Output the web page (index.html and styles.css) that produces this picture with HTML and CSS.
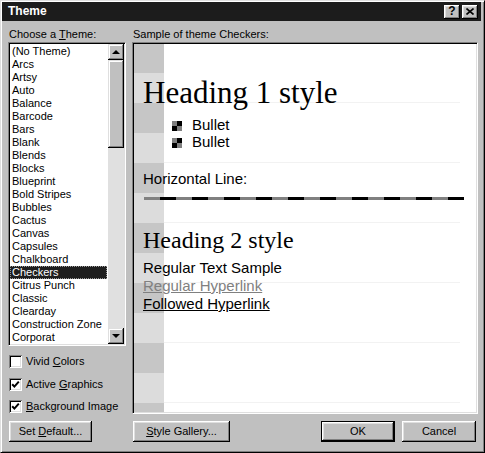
FILE: index.html
```html
<!DOCTYPE html>
<html>
<head>
<meta charset="utf-8">
<title>Theme</title>
<link rel="stylesheet" href="styles.css">
</head>
<body>
<div class="window">
  <div class="titlebar">
    <span class="title">Theme</span>
    <div class="tb-buttons">
      <span class="tb-btn tb-help">?</span>
      <span class="tb-btn"><svg width="8" height="7" viewBox="0 0 8 7"><path d="M0.5 0.5 L7.5 6.5 M7.5 0.5 L0.5 6.5" stroke="#000" stroke-width="1.6" fill="none"/></svg></span>
    </div>
  </div>
  <div class="main">
    <div class="left">
      <div class="label lbl-left">Choose a <u>T</u>heme:</div>
      <div class="listbox">
        <ul class="items">
          <li>(No Theme)</li>
          <li>Arcs</li>
          <li>Artsy</li>
          <li>Auto</li>
          <li>Balance</li>
          <li>Barcode</li>
          <li>Bars</li>
          <li>Blank</li>
          <li>Blends</li>
          <li>Blocks</li>
          <li>Blueprint</li>
          <li>Bold Stripes</li>
          <li>Bubbles</li>
          <li>Cactus</li>
          <li>Canvas</li>
          <li>Capsules</li>
          <li>Chalkboard</li>
          <li class="selected">Checkers</li>
          <li>Citrus Punch</li>
          <li>Classic</li>
          <li>Clearday</li>
          <li>Construction Zone</li>
          <li>Corporat</li>
        </ul>
        <div class="scrollbar">
          <div class="sb-btn"><svg width="16" height="16" viewBox="0 0 16 16"><polygon points="4,10 12,10 8,6" fill="#000"/></svg></div>
          <div class="sb-thumb"></div>
          <div class="sb-track"></div>
          <div class="sb-btn"><svg width="16" height="16" viewBox="0 0 16 16"><polygon points="4,6 12,6 8,10" fill="#000"/></svg></div>
        </div>
      </div>
      <div class="check check-1"><span class="box"></span><span>Vivid <u>C</u>olors</span></div>
      <div class="check check-2"><span class="box"><svg width="13" height="13" viewBox="0 0 13 13"><path d="M3.2 6.2 L5.4 8.6 L9.8 3.6" stroke="#000" stroke-width="2" fill="none"/></svg></span><span>Active <u>G</u>raphics</span></div>
      <div class="check check-3"><span class="box"><svg width="13" height="13" viewBox="0 0 13 13"><path d="M3.2 6.2 L5.4 8.6 L9.8 3.6" stroke="#000" stroke-width="2" fill="none"/></svg></span><span><u>B</u>ackground Image</span></div>
    </div>
    <div class="right">
      <div class="label lbl-right">Sample of theme Checkers:</div>
      <div class="preview">
        <div class="h1">Heading 1 style</div>
        <ul class="bullets">
          <li><span class="bullet"></span>Bullet</li>
          <li><span class="bullet"></span>Bullet</li>
        </ul>
        <div class="hr-label">Horizontal Line:</div>
        <div class="dash"></div>
        <div class="h2">Heading 2 style</div>
        <div class="text">Regular Text Sample</div>
        <div class="text link">Regular Hyperlink</div>
        <div class="text followed">Followed Hyperlink</div>
      </div>
    </div>
  </div>
  <div class="buttons">
    <div class="btn btn-default">Set <u>D</u>efault...</div>
    <div class="btn btn-style"><u>S</u>tyle Gallery...</div>
    <div class="btn btn-ok">OK</div>
    <div class="btn btn-cancel">Cancel</div>
  </div>
</div>
</body>
</html>
```
FILE: styles.css
```css
* { box-sizing: border-box; }
html, body { margin: 0; padding: 0; background: #c0c0c0; }
body {
  font-family: "Liberation Sans", Arial, sans-serif;
  font-size: 11px;
  color: #000;
}
u { text-decoration: underline; text-underline-offset: 1px; }

.window {
  width: 485px;
  height: 453px;
  background: #c0c0c0;
  border: 1px solid;
  border-color: #dfdfdf #000 #000 #dfdfdf;
  box-shadow: inset 1px 1px #fff, inset -1px -1px #808080;
  padding: 1px;
  display: flex;
  flex-direction: column;
}

.titlebar {
  height: 19px;
  margin-right: 2px;
  background: #1c1c1c;
  display: flex;
  align-items: center;
  padding: 0 3px 0 6px;
}
.title {
  color: #fff;
  font-weight: bold;
  font-size: 12px;
  line-height: 19px;
}
.tb-buttons {
  margin-left: auto;
  display: flex;
  gap: 2px;
}
.tb-btn {
  width: 16px;
  height: 14px;
  background: #c0c0c0;
  box-shadow: inset -1px -1px #000, inset 1px 1px #fff, inset -2px -2px #808080, inset 2px 2px #dfdfdf;
  display: flex;
  align-items: center;
  justify-content: center;
  font-weight: bold;
  font-size: 12px;
  line-height: 14px;
  padding-bottom: 1px;
}

.main {
  display: flex;
  margin-top: 7px;
  padding-left: 6px;
  gap: 6px;
}
.left { width: 118px; }
.right { width: 346px; }

.label {
  height: 13px;
  line-height: 13px;
  white-space: nowrap;
}
.lbl-left { padding-left: 1px; }
.lbl-right { padding-left: 1px; }

.listbox {
  margin-top: 1px;
  height: 304px;
  background: #fff;
  border: 1px solid;
  border-color: #808080 #fff #fff #808080;
  box-shadow: inset 1px 1px #000, inset -1px -1px #dfdfdf;
  padding: 1px;
  display: flex;
}
.items {
  list-style: none;
  margin: 0;
  padding: 1px 0 0 0;
  flex: 1;
  overflow: hidden;
}
.items li {
  height: 13px;
  line-height: 13px;
  padding-left: 2px;
  margin-right: 1px;
  white-space: nowrap;
}
.items li.selected {
  background: #1e1e1e;
  color: #fff;
  outline: 1px dotted #9a9a9a;
  outline-offset: -1px;
}
.scrollbar {
  width: 16px;
  display: flex;
  flex-direction: column;
}
.sb-btn, .sb-thumb {
  background: #c0c0c0;
  box-shadow: inset -1px -1px #000, inset 1px 1px #dfdfdf, inset -2px -2px #808080, inset 2px 2px #fff;
}
.sb-btn { height: 16px; }
.sb-btn svg { display: block; }
.sb-thumb { height: 88px; }
.sb-track { flex: 1; background: #e0e0e0; }

.check {
  display: flex;
  align-items: center;
  height: 13px;
  line-height: 13px;
  padding-left: 1px;
  gap: 4px;
  white-space: nowrap;
}
.check-1 { margin-top: 9px; }
.check-2 { margin-top: 10px; }
.check-3 { margin-top: 9px; }
.box {
  width: 13px;
  height: 13px;
  background: #fff;
  box-shadow: inset 1px 1px #808080, inset -1px -1px #fff, inset 2px 2px #000, inset -2px -2px #dfdfdf;
  flex: none;
}
.box svg { display: block; }

.preview {
  margin-top: 1px;
  height: 372px;
  border: 1px solid;
  border-color: #808080 #fff #fff #808080;
  box-shadow: inset 1px 1px #000, inset -1px -1px #dfdfdf;
  background-color: #fff;
  background-image:
    repeating-linear-gradient(to bottom, #c6c6c6 0 30px, #dcdcdc 30px 60px),
    repeating-linear-gradient(to bottom, transparent 0 59px, #f2f2f2 59px 60px);
  background-size: 30px 100%, 296px 100%;
  background-position: 1px 0, 31px 0;
  background-repeat: no-repeat;
  padding: 32px 0 0 10px;
  font-family: "Liberation Sans", Arial, sans-serif;
  font-size: 15px;
}
.h1 {
  font-family: "Liberation Serif", "Times New Roman", serif;
  font-size: 31px;
  line-height: 36px;
  height: 36px;
  white-space: nowrap;
}
.bullets {
  list-style: none;
  margin: 5px 0 0 0;
  padding: 0 0 0 29px;
}
.bullets li {
  display: flex;
  align-items: flex-start;
  height: 17px;
  line-height: 17px;
  gap: 10px;
}
.bullet {
  width: 10px;
  height: 10px;
  margin-top: 5px;
  flex: none;
  background:
    linear-gradient(#808080, #808080) 0 0 / 5px 5px no-repeat,
    linear-gradient(#808080, #808080) 5px 5px / 5px 5px no-repeat,
    #000;
}
.hr-label {
  margin-top: 20px;
  height: 17px;
  line-height: 17px;
}
.dash {
  margin-top: 10px;
  margin-left: 1px;
  width: 320px;
  height: 3px;
  background: repeating-linear-gradient(to right, #808080 0 16px, #000 16px 32px);
}
.h2 {
  margin-top: 26px;
  font-family: "Liberation Serif", "Times New Roman", serif;
  font-size: 24px;
  line-height: 28px;
  height: 28px;
  white-space: nowrap;
}
.text {
  height: 18px;
  line-height: 18px;
  white-space: nowrap;
}
.h2 + .text { margin-top: 5px; }
.link {
  color: #808080;
  text-decoration: underline;
}
.followed {
  color: #000;
  text-decoration: underline;
}

.buttons {
  display: flex;
  margin-top: 7px;
  padding: 0 7px 0 7px;
}
.btn {
  height: 21px;
  line-height: 21px;
  text-align: center;
  background: #c0c0c0;
  box-shadow: inset -1px -1px #000, inset 1px 1px #fff, inset -2px -2px #808080, inset 2px 2px #dfdfdf;
  white-space: nowrap;
}
.btn-default { width: 83px; }
.btn-style { width: 97px; margin-left: 41px; }
.btn-ok {
  width: 74px;
  margin-left: auto;
  border: 1px solid #000;
  line-height: 19px;
}
.btn-cancel { width: 74px; margin-left: 7px; }
```
